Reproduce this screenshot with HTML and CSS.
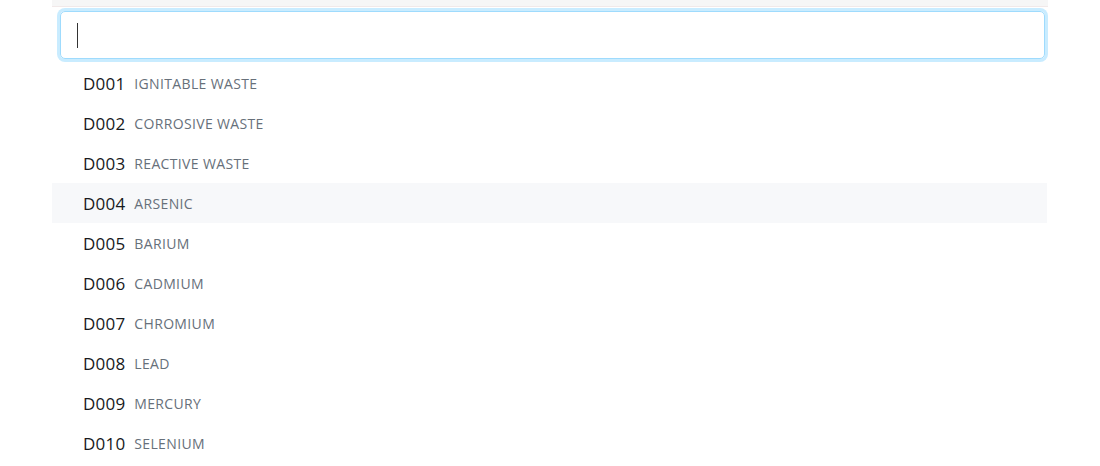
FILE: index.html
```html
<!DOCTYPE html>
<html lang="en">
<head>
  <meta charset="UTF-8">
  <title>Waste Code Search</title>
  <link rel="stylesheet" href="styles.css">
</head>
<body>
  <div class="panel">
    <div class="topbar"></div>
    <div class="search">
      <div class="search-box"><span class="caret"></span></div>
    </div>
    <ul class="results">
      <li><span class="code">D001</span><span class="desc">Ignitable waste</span></li>
      <li><span class="code">D002</span><span class="desc">Corrosive waste</span></li>
      <li><span class="code">D003</span><span class="desc">Reactive waste</span></li>
      <li class="active"><span class="code">D004</span><span class="desc">Arsenic</span></li>
      <li><span class="code">D005</span><span class="desc">Barium</span></li>
      <li><span class="code">D006</span><span class="desc">Cadmium</span></li>
      <li><span class="code">D007</span><span class="desc">Chromium</span></li>
      <li><span class="code">D008</span><span class="desc">Lead</span></li>
      <li><span class="code">D009</span><span class="desc">Mercury</span></li>
      <li><span class="code">D010</span><span class="desc">Selenium</span></li>
    </ul>
  </div>
</body>
</html>
```

FILE: styles.css
```css
body {
  margin: 0;
  padding: 0;
  background: #fff;
  font-family: "Open Sans", sans-serif;
}

.panel {
  width: 996px;
  margin-left: 52px;
}

.topbar {
  height: 6px;
  background: #f6f6f6;
  border-bottom: 1px solid #f1e9e9;
}

.search {
  padding: 4px 3px 4px 8px;
}

.search-box {
  height: 46px;
  border: 1px solid #9fdbfd;
  border-radius: 5px;
  box-shadow: 0 0 0 3px #c9ecff;
  display: flex;
  align-items: center;
  padding-left: 16px;
}

.caret {
  width: 1px;
  height: 25px;
  background: #333;
}

.results {
  list-style: none;
  margin: 0;
  padding: 0;
  width: 995px;
}

.results li {
  height: 40px;
  box-sizing: border-box;
  padding-top: 1px;
  display: flex;
  align-items: center;
  padding-left: 31px;
}

.results li.active {
  background: #f7f8fa;
}

.code {
  font-size: 17px;
  color: #17191c;
  letter-spacing: 0.2px;
}

.desc {
  margin-left: 9px;
  font-size: 14px;
  letter-spacing: 0.35px;
  text-transform: uppercase;
  color: #67707a;
}
```
